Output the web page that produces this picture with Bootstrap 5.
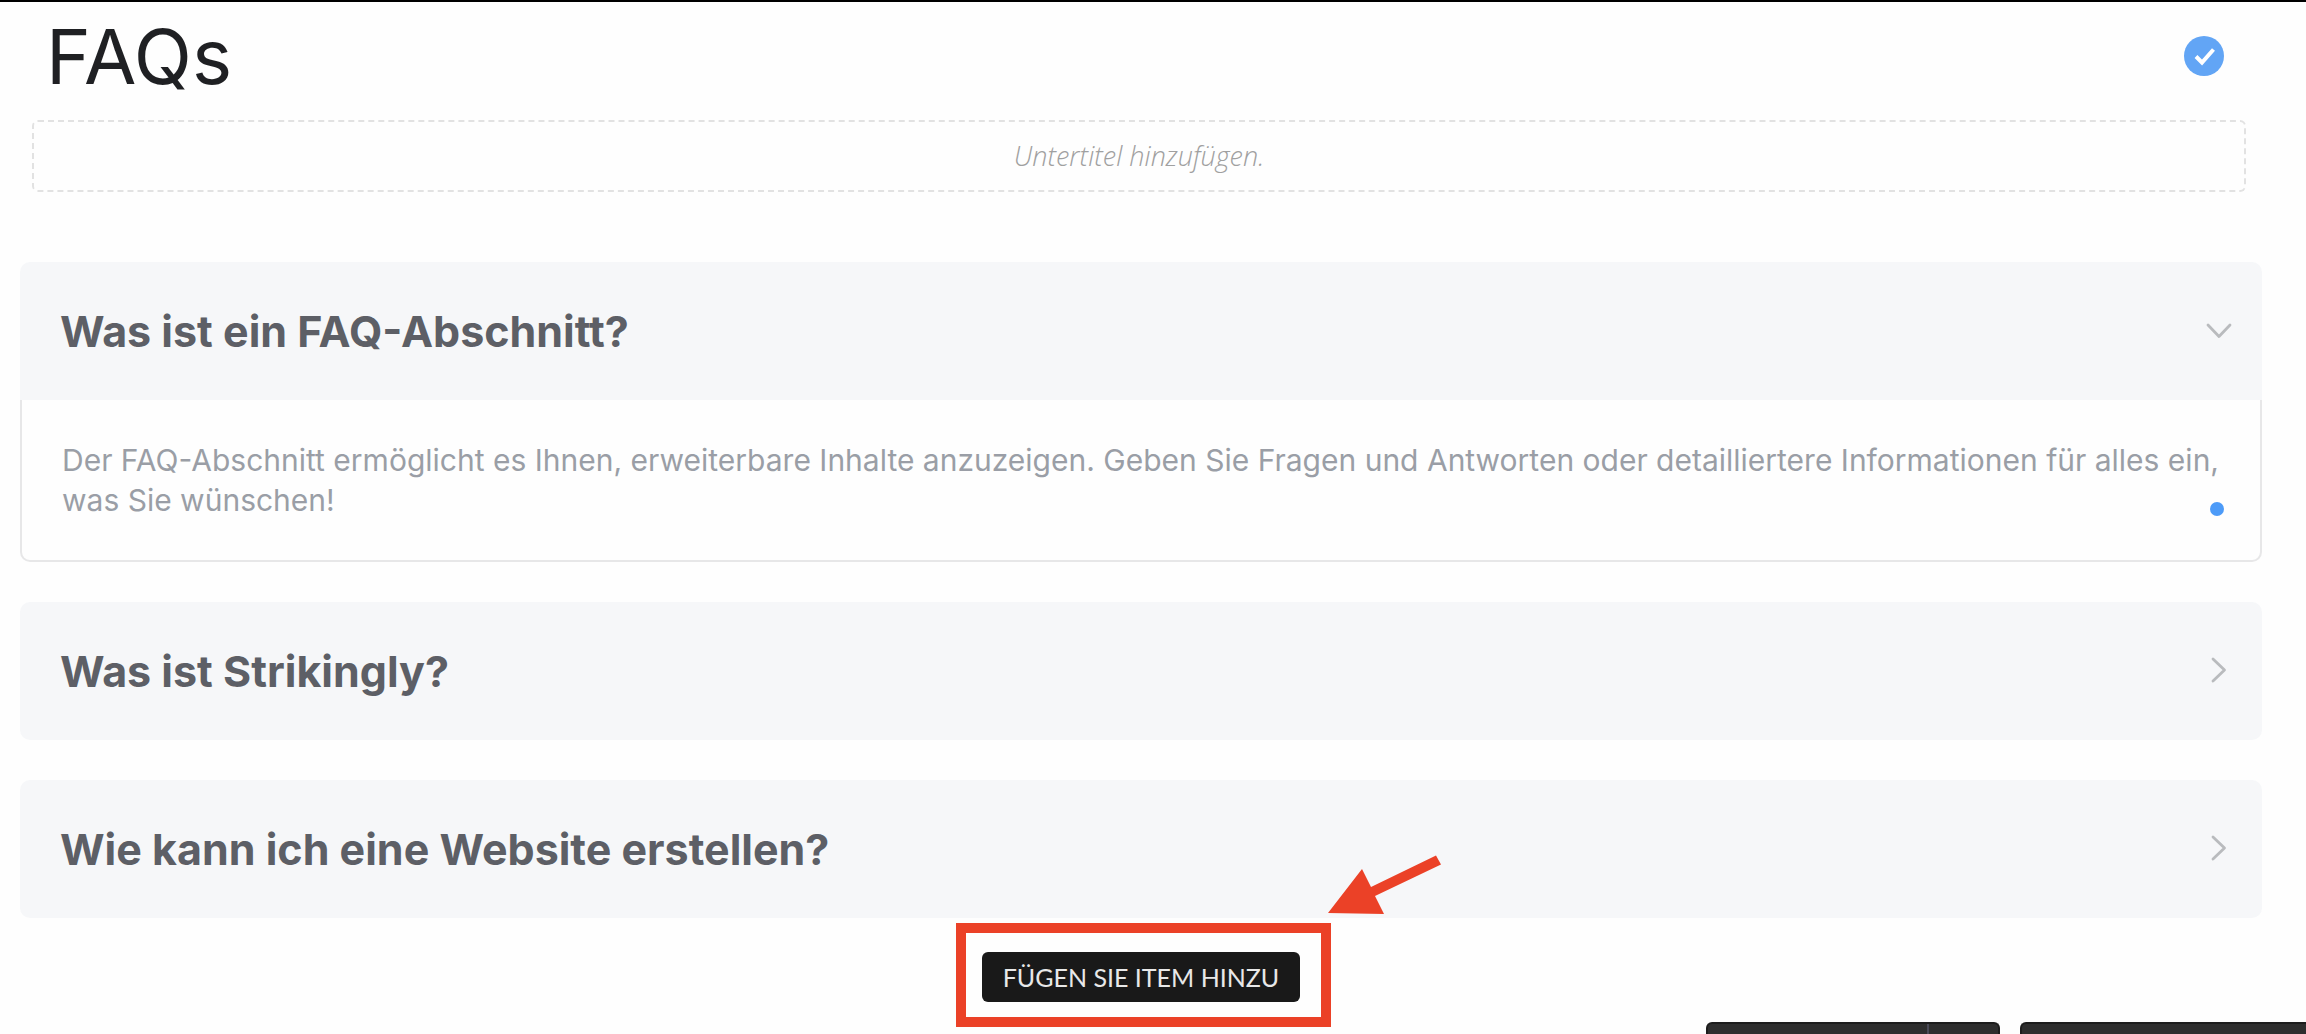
<!DOCTYPE html>
<html lang="de">
<head>
<meta charset="utf-8">
<meta name="viewport" content="width=device-width, initial-scale=1">
<title>FAQs</title>
<link href="https://cdn.jsdelivr.net/npm/bootstrap@5.3.0/dist/css/bootstrap.min.css" rel="stylesheet">
<style>
  body { font-family: Inter, "Open Sans", sans-serif; background: #fefefe; color: #1f2023; }
  .page-edge { border-top: 2px solid #000; padding: 0 44px 0 20px; }
  .section-head { padding: 12px 38px 12px 26px; }
  .section-title { font-size: 76px; line-height: 84px; font-weight: 400; }
  .done-btn { width: 40px; height: 40px; background: #62a5f5; }
  .subtitle-box { margin: 10px 16px 70px 12px; height: 72px; border: 2px dashed #e2e2e2; border-radius: 6px;
    font: italic 300 27px/36px "Open Sans", sans-serif; color: #a0a0a0; }
  .faq-list { gap: 40px; }
  .faq-toggle { min-height: 138px; padding: 0 28px 0 40px; background: #f6f7f9; border-radius: 10px; color: #5d5f66; }
  .faq-toggle.is-open { border-radius: 10px 10px 0 0; }
  .faq-label { font-size: 43px; line-height: 48px; font-weight: 700; }
  .faq-body { padding: 40px 36px 40px 40px; border: 2px solid #e7e7e8; border-top: 0; border-radius: 0 0 10px 10px;
    font-size: 30px; line-height: 40px; font-weight: 400; color: #9a9ea6; }
  .edit-dot { width: 14px; height: 14px; right: 36px; bottom: 44px; background: #4d9bf8; }
  .add-area { padding-top: 34px; padding-bottom: 30px; }
  .add-btn { width: 318px; height: 50px; background: #191919; color: #e8e8e8; border-radius: 6px;
    font: 400 25px/30px Lato, sans-serif; }
  .callout-frame { inset: -29px -31px -25px -26px; border: 10px solid #eb4127; pointer-events: none; }
  .callout-arrow { left: 100%; bottom: 100%; margin: 0 0 36px 26px; pointer-events: none; }
  .tool-bar { gap: 20px; height: 12px; }
  .tool-group { width: 294px; border: 2px solid #1d1d1d; border-bottom: 0; border-radius: 6px 6px 0 0; background: #2e2e2e; overflow: hidden; }
  .tool-group.is-last { width: 286px; border-right: 0; border-radius: 6px 0 0 0; }
  .tool-more { width: 71px; border-left: 2px solid #4a4a57 !important; }
</style>
</head>
<body>
<main class="page-edge">
  <header class="section-head d-flex justify-content-between align-items-center">
    <h1 class="section-title m-0">FAQs</h1>
    <button type="button" class="done-btn btn rounded-circle border-0 p-0 d-flex" aria-label="Fertig">
      <svg width="40" height="40" viewBox="0 0 40 40" fill="none" stroke="#fff" stroke-width="4"><path d="M12 20.500l6 6L29.500 13.500"/></svg>
    </button>
  </header>
  <div class="subtitle-box d-flex align-items-center justify-content-center">Untertitel hinzufügen.</div>

  <section class="faq-list d-flex flex-column">
    <article>
      <h2 class="m-0 d-flex">
        <button type="button" class="faq-toggle is-open border-0 w-100 d-flex align-items-center justify-content-between text-start" data-bs-toggle="collapse" data-bs-target="#faq1" aria-expanded="true">
          <span class="faq-label">Was ist ein FAQ-Abschnitt?</span>
          <svg width="28" height="28" viewBox="0 0 28 28" fill="none" stroke="#b9bbbe" stroke-width="2.800" stroke-linecap="round" stroke-linejoin="round"><path d="M2 8l11 11.500L24 8"/></svg>
        </button>
      </h2>
      <div id="faq1" class="collapse show">
        <div class="faq-body position-relative">Der FAQ-Abschnitt ermöglicht es Ihnen, erweiterbare Inhalte anzuzeigen. Geben Sie Fragen und Antworten oder detailliertere Informationen für alles ein, was Sie wünschen!
          <span class="edit-dot position-absolute rounded-circle"></span>
        </div>
      </div>
    </article>
    <article>
      <h2 class="m-0 d-flex">
        <button type="button" class="faq-toggle border-0 w-100 d-flex align-items-center justify-content-between text-start">
          <span class="faq-label">Was ist Strikingly?</span>
          <svg width="28" height="28" viewBox="0 0 28 28" fill="none" stroke="#b9bbbe" stroke-width="2.800" stroke-linecap="round" stroke-linejoin="round"><path d="M7 2L18.500 13 7 24"/></svg>
        </button>
      </h2>
    </article>
    <article>
      <h2 class="m-0 d-flex">
        <button type="button" class="faq-toggle border-0 w-100 d-flex align-items-center justify-content-between text-start">
          <span class="faq-label">Wie kann ich eine Website erstellen?</span>
          <svg width="28" height="28" viewBox="0 0 28 28" fill="none" stroke="#b9bbbe" stroke-width="2.800" stroke-linecap="round" stroke-linejoin="round"><path d="M7 2L18.500 13 7 24"/></svg>
        </button>
      </h2>
    </article>
  </section>

  <div class="add-area d-flex justify-content-center">
    <div class="position-relative">
      <button type="button" class="add-btn border-0 p-0 d-block">FÜGEN SIE ITEM HINZU</button>
      <div class="callout-frame position-absolute"></div>
      <svg class="callout-arrow position-absolute" width="116" height="62" viewBox="0 0 116 62" fill="#eb4127"><path d="M2 59L36 15l9 18L110 1.500l5 9L49 42l9 18z"/></svg>
    </div>
  </div>
</main>

<nav class="tool-bar fixed-bottom d-flex justify-content-end" aria-label="Werkzeuge">
  <div class="tool-group d-flex">
    <button type="button" class="flex-fill border-0 bg-transparent p-0" aria-label="Stile"></button>
    <button type="button" class="tool-more border-0 bg-transparent p-0" aria-label="Mehr"></button>
  </div>
  <button type="button" class="tool-group is-last p-0" aria-label="Hilfe"></button>
</nav>
<script src="https://cdn.jsdelivr.net/npm/bootstrap@5.3.0/dist/js/bootstrap.bundle.min.js"></script>
</body>
</html>
